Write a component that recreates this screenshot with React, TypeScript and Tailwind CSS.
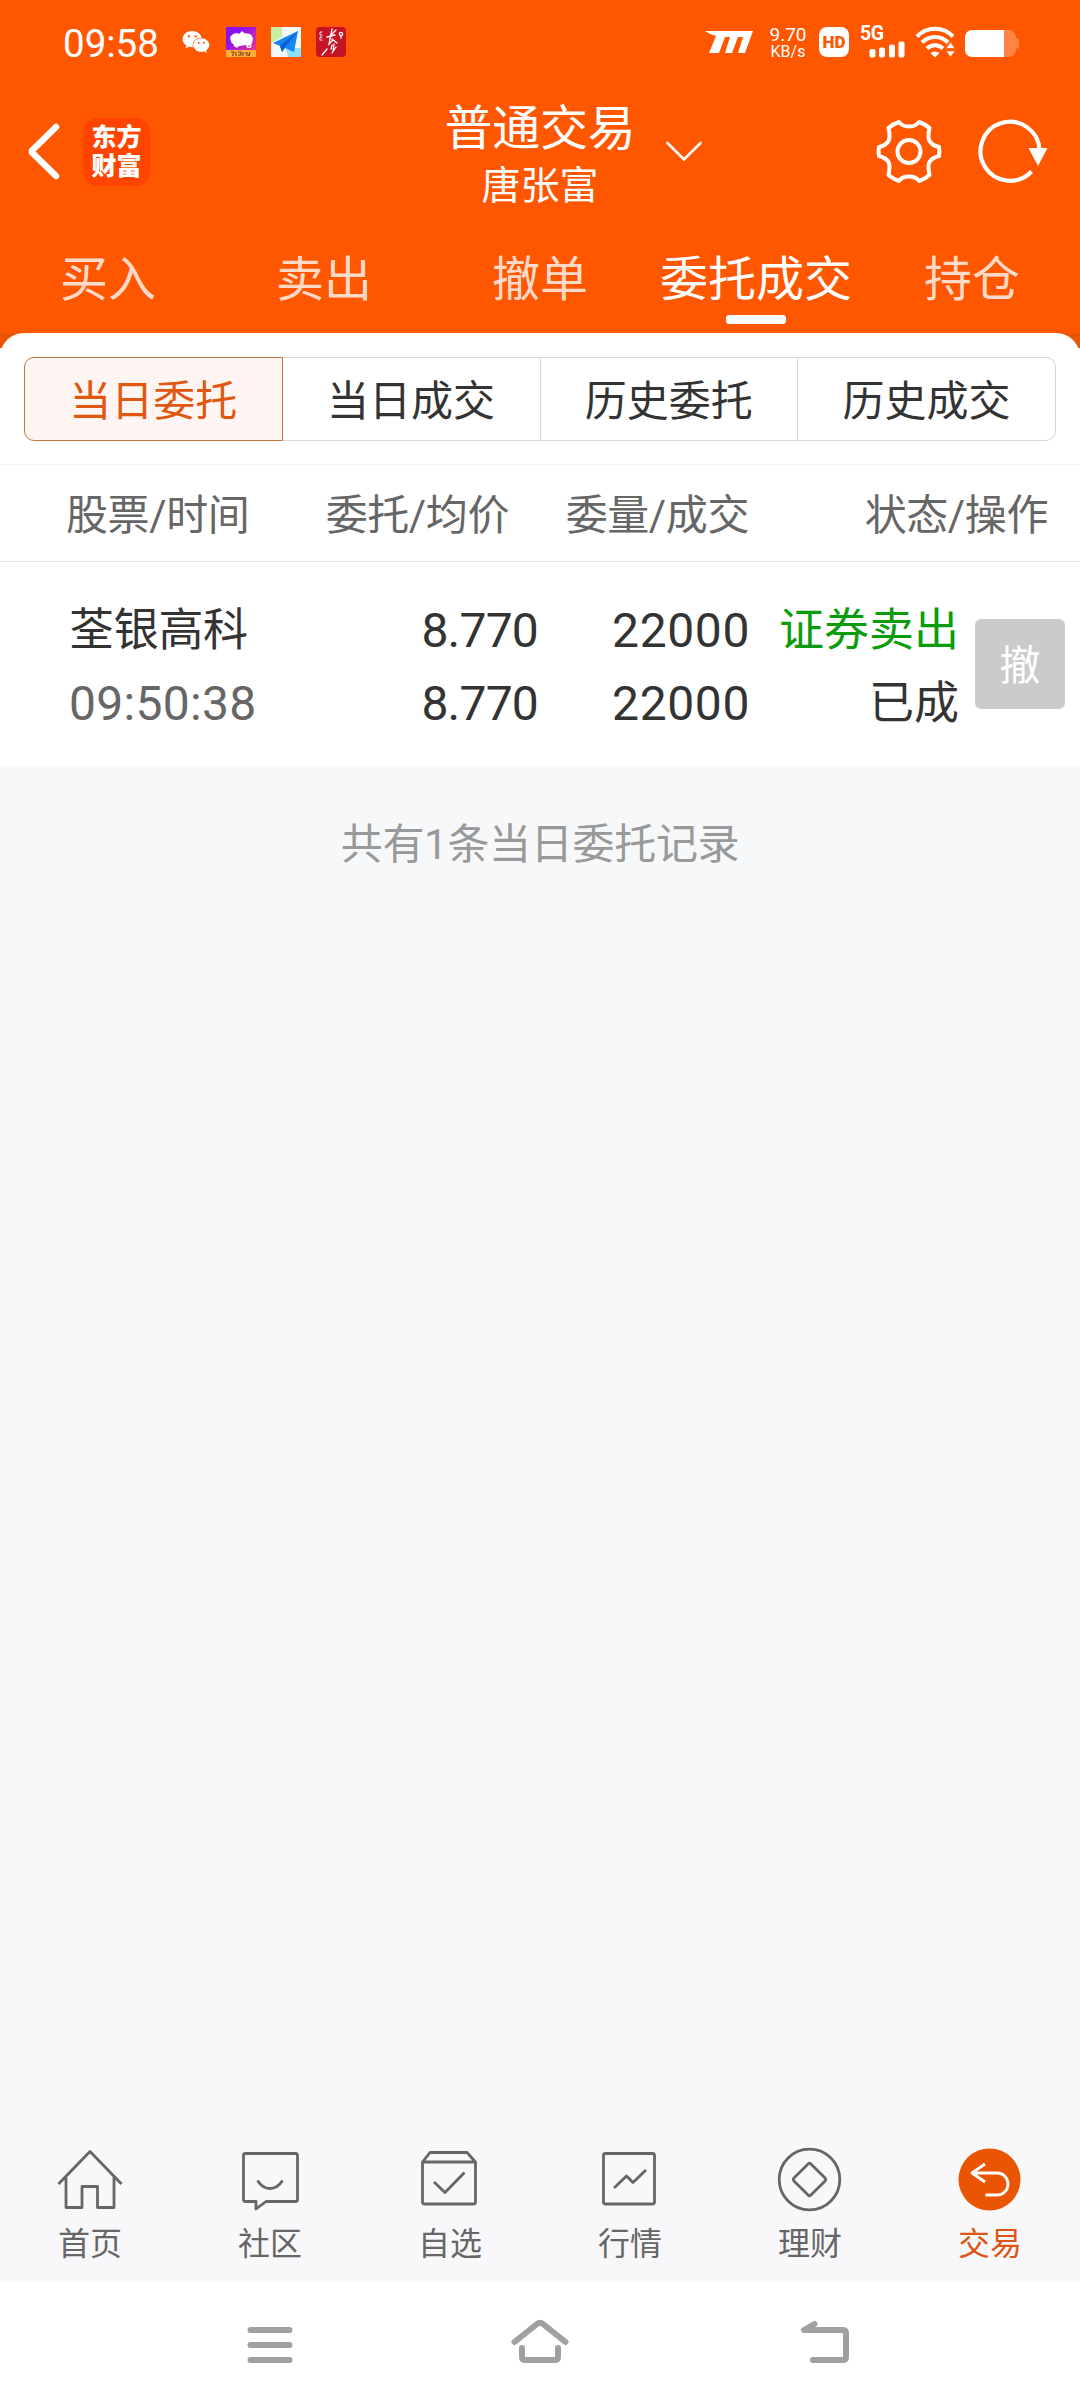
import { FaWeixin } from "react-icons/fa";

const tabs = ["买入", "卖出", "撤单", "委托成交", "持仓"];
const segments = ["当日委托", "当日成交", "历史委托", "历史成交"];

const orders = [
  {
    name: "荃银高科",
    time: "09:50:38",
    price: "8.770",
    avgPrice: "8.770",
    amount: "22000",
    dealt: "22000",
    side: "证券卖出",
    status: "已成",
  },
];

const StatusBar = () => (
  <div className="h-[84px] shrink-0 flex items-start text-white">
    <span className="ml-[63px] mt-[22px] w-[97px] text-[38.500px] leading-[44px]">09:58</span>
    <FaWeixin className="ml-[22px] mt-[26px] w-[28px] h-[32px]" />

    <svg className="ml-[16px] mt-[27px]" width="30" height="30" viewBox="0 0 30 30">
      <defs>
        <linearGradient id="pig" x1="0" y1="0" x2="1" y2="1">
          <stop offset="0.3" stopColor="#8a10f0" />
          <stop offset="0.9" stopColor="#f0388c" />
        </linearGradient>
      </defs>
      <rect width="30" height="30" fill="url(#pig)" />
      <path d="M4 10l3-3 4-1 2 1 3-3 2 2 6 1 2 2 1 3-1 4-3 3-4-1-5 1-5 0-4-4z" fill="#fff" />
      <circle cx="10.500" cy="18" r="2" fill="none" stroke="#fff" strokeWidth="1.200" />
      <circle cx="23" cy="18.500" r="2" fill="none" stroke="#fff" strokeWidth="1.200" />
      <rect y="23" width="30" height="7" fill="#fbb03a" />
      <path d="M5 25h3l-1.500 4M10 25v4M12 25h3v3h-3M17 25v4M19 26h3M20 28h3M24 25l-1 4" stroke="#7a2c18" fill="none" />
    </svg>

    <svg className="ml-[15px] mt-[27px]" width="30" height="30" viewBox="0 0 30 30">
      <rect width="30" height="30" fill="#f4f6f7" />
      <path d="M0 0h11v10L0 16z" fill="#c5f0a4" />
      <path d="M15 21h15v9H17z" fill="#8fe0fa" />
      <path d="M27 4L2 16l7 3 2 6 3-4 9 4z" fill="#1585f5" />
      <path d="M27 4L9 19l2 6 3-5z" fill="#0b5fd0" />
    </svg>

    <svg className="ml-[15px] mt-[27px]" width="30" height="30" viewBox="0 0 30 30">
      <rect width="30" height="30" rx="4" fill="#c41425" />
      <g fill="none" stroke="#fff" strokeWidth="1.300" strokeLinecap="round">
        <path d="M16 2l-2 10M20 3l-5 5M11 10l8-2M14 12l-1 5 4-4M16 12l5 4M16 18l-1 4M18 17l-1 7M20 20l-4 6M11 22l-5 6" />
        <path d="M6 5H4v3h2M6 10H4v2M6 13H4" strokeWidth="0.900" />
        <circle cx="25" cy="7" r="1.600" />
        <path d="M25 9v2" />
      </g>
    </svg>

    <svg className="ml-[359px] mt-[30px]" width="49" height="24" viewBox="0 0 49 24" fill="#fff">
      <path d="M0 1h48l-8 22h-7l5-16h-5l-6 16h-7l5-16h-5l-6 16H4L11 6C7 5 3 3 0 1z" />
    </svg>

    <div className="ml-[15px] mt-[26px] w-[38px] flex flex-col items-center">
      <span className="text-[19px] leading-[17px]">9.70</span>
      <span className="text-[16px] leading-[17px]">KB/s</span>
    </div>

    <div className="ml-[12px] mt-[27px] w-[30px] h-[30px] rounded-[8px] bg-white text-[#ff5600] font-black text-[17px] leading-[30px] text-center">
      HD
    </div>

    <div className="ml-[11px] mt-[25px] h-[33px] w-[46px] flex flex-col">
      <span className="h-[16px] text-[19.500px] leading-[18px] font-bold tracking-[-0.5px]">5G</span>
      <svg className="ml-[9px]" width="37" height="17" viewBox="0 0 37 17" fill="#fff">
        <rect x="0.500" y="8" width="6" height="8.500" rx="2" />
        <rect x="10" y="6.500" width="6" height="10" rx="2" />
        <rect x="20" y="3.500" width="6" height="13" rx="2" />
        <rect x="29.500" y="0.500" width="6" height="16" rx="2" />
      </svg>
    </div>

    <svg className="ml-[9px] mt-[26px]" width="42" height="32" viewBox="0 0 42 32">
      <g fill="none" stroke="#fff" strokeWidth="4">
        <path d="M2 10.500a25 25 0 0 1 36 0" />
        <path d="M7 16.500a18 18 0 0 1 26 0" />
        <path d="M12 22.500a11.500 11.500 0 0 1 16 0" />
      </g>
      <path d="M15.500 27q4.500-3 9 0L20 31.500z" fill="#fff" />
      <path d="M31 22.500l4.500-6.500 4.500 6.500zM31 25h9l-4.500 6z" fill="#fff" stroke="#ff5600" strokeWidth="0.600" />
    </svg>

    <svg className="ml-[8px] mt-[30px]" width="54" height="27" viewBox="0 0 54 27">
      <path d="M6 0h38a7 7 0 0 1 7 7v1.500h1.500q1.500 0 1.500 1.500v7q0 1.500-1.500 1.500H51V20a7 7 0 0 1-7 7H6z" fill="#ff8345" />
      <path d="M39 0H7a7 7 0 0 0-7 7v13a7 7 0 0 0 7 7h32z" fill="#fff" />
    </svg>
  </div>
);

const Header = () => (
  <div className="h-[136px] shrink-0 flex items-center text-white">
    <div className="flex-1 flex items-center">
      <svg className="ml-[24px]" width="40" height="60" viewBox="0 0 40 60">
        <path d="M32 5L7 29.500l25 24.500" fill="none" stroke="#fff" strokeWidth="6.500" strokeLinecap="round" strokeLinejoin="bevel" />
      </svg>
      <div className="ml-[19px] w-[67px] h-[68px] rounded-[14px] bg-[#ff4400] flex flex-col items-center justify-center font-black text-[25px] leading-[29px]">
        <span>东方</span>
        <span>财富</span>
      </div>
    </div>

    <div className="w-[192px] pt-[8px] flex flex-col items-center">
      <h1 className="text-[48px] leading-[60px] tracking-[-0.2px]">普通交易</h1>
      <span className="text-[39px] leading-[54px]">唐张富</span>
    </div>

    <div className="flex-1 flex items-center">
      <svg className="ml-[28px]" width="40" height="24" viewBox="0 0 40 24">
        <path d="M3.500 3L20 19.500 36.500 3" fill="none" stroke="#fff" strokeWidth="2.600" strokeLinecap="round" />
      </svg>
      <svg className="ml-[170px]" width="70" height="70" viewBox="0 0 70 70" fill="none" stroke="#fff" strokeWidth="4">
        <path
          strokeLinejoin="round"
          d="M25 5Q28 9.500 35 9.500T45 5Q51 7 55.500 11C53.500 20 53 27 65 30Q66 34 65 39C53 42 53.500 49 55.500 58Q51 62 45 64Q42 59.500 35 59.500T25 64Q19 62 14.500 58C16.500 49 17 42 5 39Q4 34 5 30C17 27 16.500 20 14.500 11Q19 7 25 5Z"
        />
        <circle cx="35" cy="34.500" r="11.500" />
      </svg>
      <svg className="ml-[31px]" width="74" height="70" viewBox="0 0 74 70">
        <path d="M56.500 54.500A29.500 29.500 0 1 1 64.500 33" fill="none" stroke="#fff" strokeWidth="4.200" />
        <path d="M53.500 31h19L63 49z" fill="#fff" />
      </svg>
    </div>
  </div>
);

const tabIcons = [
  <path d="M4.500 40L36 7.500 67.500 40M12 33.500V63.500H28V42.500H43.500V63.500H60V33.500" />,
  <path d="M11.500 9.500h50q2 0 2 2v44q0 2-2 2H32L22 65v-7.500H11.500q-2 0-2-2v-44q0-2 2-2zM23.500 36.500q5 8 12.500 8t12.500-8" />,
  <path d="M8.500 18L16 8.500H53L61.500 18V58q0 2-2 2H10.500q-2 0-2-2zM8.500 18H61.500M20 38L31 48.500 50.500 28.500" />,
  <path d="M11.500 9.500h47q2 0 2 2v46.500q0 2-2 2h-47q-2 0-2-2V11.500q0-2 2-2zM20 44L32.500 32l6.500 6.500L52 26" />,
  <>
    <circle cx="35.500" cy="35.500" r="30.300" />
    <rect x="23.500" y="23.500" width="24" height="24" rx="2" transform="rotate(45 35.500 35.500)" />
  </>,
  <>
    <circle cx="35.500" cy="35.500" r="31" fill="#ea5504" stroke="none" />
    <path d="M31 20L18 29 31 38M18 29H43.500a10.500 11 0 0 1 0 22H31.500" stroke="#fff" />
  </>,
];
const tabLabels = ["首页", "社区", "自选", "行情", "理财", "交易"];

const BottomTabs = () => (
  <nav className="h-[150px] shrink-0 grid grid-cols-6 bg-[#f8f8fa] pt-[12px]">
    {tabLabels.map((label, i) => (
      <div
        key={label}
        className={`flex flex-col items-center text-[32px] leading-[40px] ${
          i === 5 ? "text-[#dd5513]" : "text-[#666666]"
        }`}
      >
        <svg width="72" height="72" viewBox="0 0 72 72" fill="none" stroke="currentColor" strokeWidth="2.800" strokeLinejoin="round">
          {tabIcons[i]}
        </svg>
        <span className="mt-[8px]">{label}</span>
      </div>
    ))}
  </nav>
);

const SystemNav = () => (
  <div className="h-[126px] shrink-0 bg-white flex items-start pt-[33px]">
    <svg width="60" height="60" viewBox="0 0 60 60" className="ml-[240px]" stroke="#a0a0a0" strokeWidth="6" strokeLinecap="round">
      <path d="M10.500 15h39M10.500 30h39M10.500 45h39" />
    </svg>
    <svg width="60" height="60" viewBox="0 0 60 60" className="ml-[210px]" fill="none" stroke="#a0a0a0" strokeWidth="6" strokeLinecap="round">
      <path d="M4.500 27L27 9q3-2.500 6 0L55.500 27M12 33v9q0 3 3 3H45q3 0 3-3V33" />
    </svg>
    <svg width="60" height="60" viewBox="0 0 60 60" className="ml-[225px]" fill="none" stroke="#a0a0a0" strokeWidth="6" strokeLinecap="round" strokeLinejoin="round">
      <path d="M19.500 9L9 15H48q3 0 3 3V42q0 3-3 3H18" />
    </svg>
  </div>
);

const App = () => {
  return (
    <div className="w-[1080px] h-[2408px] flex flex-col overflow-hidden bg-[#f7f8fa] font-[Roboto,'Noto_Sans_CJK_SC',sans-serif]">
      <div className="h-[348px] shrink-0 flex flex-col bg-linear-to-b from-[#ff5600] from-[333px] to-[#ea5504] to-[333px]">
        <StatusBar />
        <Header />
        <div className="h-[113px] grid grid-cols-5 text-[48px] leading-[70px] text-center pt-[25px]">
          {tabs.map((tab) => (
            <div key={tab} className={tab === "委托成交" ? "text-white" : "text-[#ffdac8]"}>
              <div className="whitespace-nowrap">{tab}</div>
              {tab === "委托成交" && <div className="mx-auto w-[60px] h-[9px] rounded-[3px] bg-white" />}
            </div>
          ))}
        </div>
      </div>

      {/* Card overlaps the header by its corner radius */}
      <main className="-mt-[15px] shrink-0 bg-white rounded-t-[24px]">
        <div className="px-[24px] pt-[24px] pb-[23px]">
          <div className="h-[84px] flex text-[42px] leading-[88px] text-center text-[#333333]">
            {segments.map((s, i) => (
              <div
                key={s}
                className={
                  i === 0
                    ? "flex-1 rounded-l-[10px] border border-[#c47440] bg-[#fff6f3] text-[#e0570f]"
                    : "flex-1 border border-l-0 border-[#d8d8d8] last:rounded-r-[10px]"
                }
              >
                {s}
              </div>
            ))}
          </div>
        </div>

        <div className="h-[98px] pt-[5px] flex items-center border-y border-t-[#f5f5f5] border-b-[#e9e9e9] text-[42px] tracking-[-0.4px] text-[#666666]">
          <span className="w-[260px] pl-[66px] whitespace-nowrap">股票/时间</span>
          <span className="w-[249px] text-right">委托/均价</span>
          <span className="w-[240px] text-right">委量/成交</span>
          <span className="w-[299px] text-right">状态/操作</span>
        </div>

        {orders.map((o) => (
          <div key={o.time} className="h-[204px] flex items-center text-[45px] leading-[73px] text-[#333333]">
            <div className="w-[300px] pl-[69px] pt-[6px] tracking-[-0.3px]">
              <div>{o.name}</div>
              <div className="text-[48px] tracking-[0.3px] text-[#666666]">{o.time}</div>
            </div>
            <div className="w-[238px] pt-[6px] text-right text-[48px] tracking-[-0.800px]">
              <div>{o.price}</div>
              <div>{o.avgPrice}</div>
            </div>
            <div className="w-[212px] pt-[6px] text-right text-[48px] tracking-[0.600px]">
              <div>{o.amount}</div>
              <div>{o.dealt}</div>
            </div>
            <div className="w-[209px] pt-[6px] text-right">
              <div className="text-[#0a9c0a]">{o.side}</div>
              <div>{o.status}</div>
            </div>
            <button className="ml-[16px] w-[90px] h-[90px] rounded-[6px] bg-[#cbcbcb] text-white text-[41px] leading-[95px]">
              撤
            </button>
          </div>
        ))}
      </main>

      <p className="flex-1 pt-[49px] text-center text-[42px] tracking-[-0.3px] leading-[60px] text-[#999999]">
        共有1条当日委托记录
      </p>

      <BottomTabs />
      <SystemNav />
    </div>
  );
};

export default App;
